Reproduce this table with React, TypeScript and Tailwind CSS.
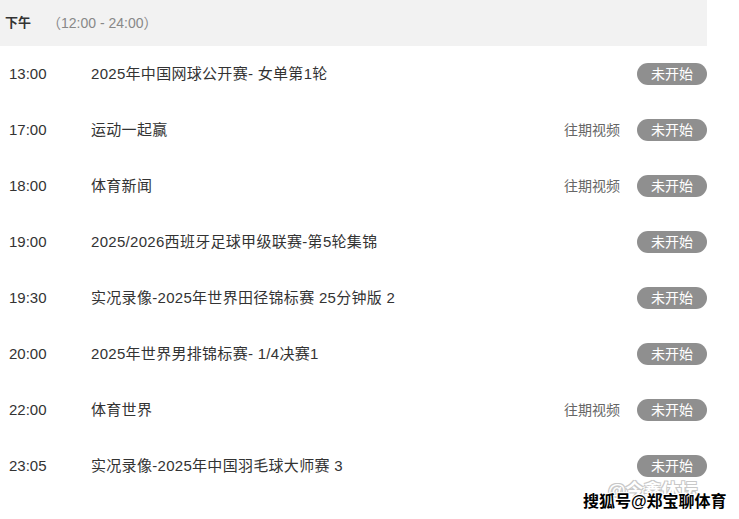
const rows = [
    { time: '13:00', title: '2025年中国网球公开赛- 女单第1轮', replay: false },
    { time: '17:00', title: '运动一起赢', replay: true },
    { time: '18:00', title: '体育新闻', replay: true },
    { time: '19:00', title: '2025/2026西班牙足球甲级联赛-第5轮集锦', replay: false },
    { time: '19:30', title: '实况录像-2025年世界田径锦标赛 25分钟版 2', replay: false },
    { time: '20:00', title: '2025年世界男排锦标赛- 1/4决赛1', replay: false },
    { time: '22:00', title: '体育世界', replay: true },
    { time: '23:05', title: '实况录像-2025年中国羽毛球大师赛 3', replay: false },
];

const font = { fontFamily: '"Liberation Sans", "Noto Sans CJK SC", sans-serif' };

export default function App() {
    return (
        <div className="relative h-[519px] w-[739px] overflow-hidden bg-white" style={font}>
            <div className="flex h-[46px] w-[707px] items-center bg-[#f2f2f2] pl-[5px]">
                <span className="text-[13px] font-bold text-[#333]">下午</span>
                <span className="ml-[16px] text-[14px] text-[#888]">（12:00 - 24:00）</span>
            </div>

            <div className="flex w-[707px] flex-col">
                {rows.map((row) => (
                    <div key={row.time} className="flex h-[56px] items-center">
                        <span className="w-[91px] pl-[9px] text-[15px] text-[#333]">{row.time}</span>
                        <span className="flex-1 text-[15px] tracking-[0.3px] text-[#333]">{row.title}</span>
                        {row.replay && <span className="mr-[17px] text-[14px] text-[#666]">往期视频</span>}
                        <span className="flex h-[22px] w-[70px] items-center justify-center rounded-full bg-[#8f8f8f] text-[14px] text-white">
                            未开始
                        </span>
                    </div>
                ))}
            </div>

            {/* watermarks laid over the last row */}
            <span
                className="absolute top-[478px] left-[608px] text-[18px] font-bold text-white"
                style={{ textShadow: '1px 1px 0 #c8c8c8, -1px -1px 0 #c8c8c8, 1px -1px 0 #c8c8c8, -1px 1px 0 #c8c8c8' }}
            >
                @今鑫体坛
            </span>
            <span
                className="absolute top-[490px] left-[583px] text-[16px] font-bold text-black"
                style={{ textShadow: '1px 1px 0 #fff, -1px -1px 0 #fff, 1px -1px 0 #fff, -1px 1px 0 #fff' }}
            >
                搜狐号@郑宝聊体育
            </span>
        </div>
    );
}
